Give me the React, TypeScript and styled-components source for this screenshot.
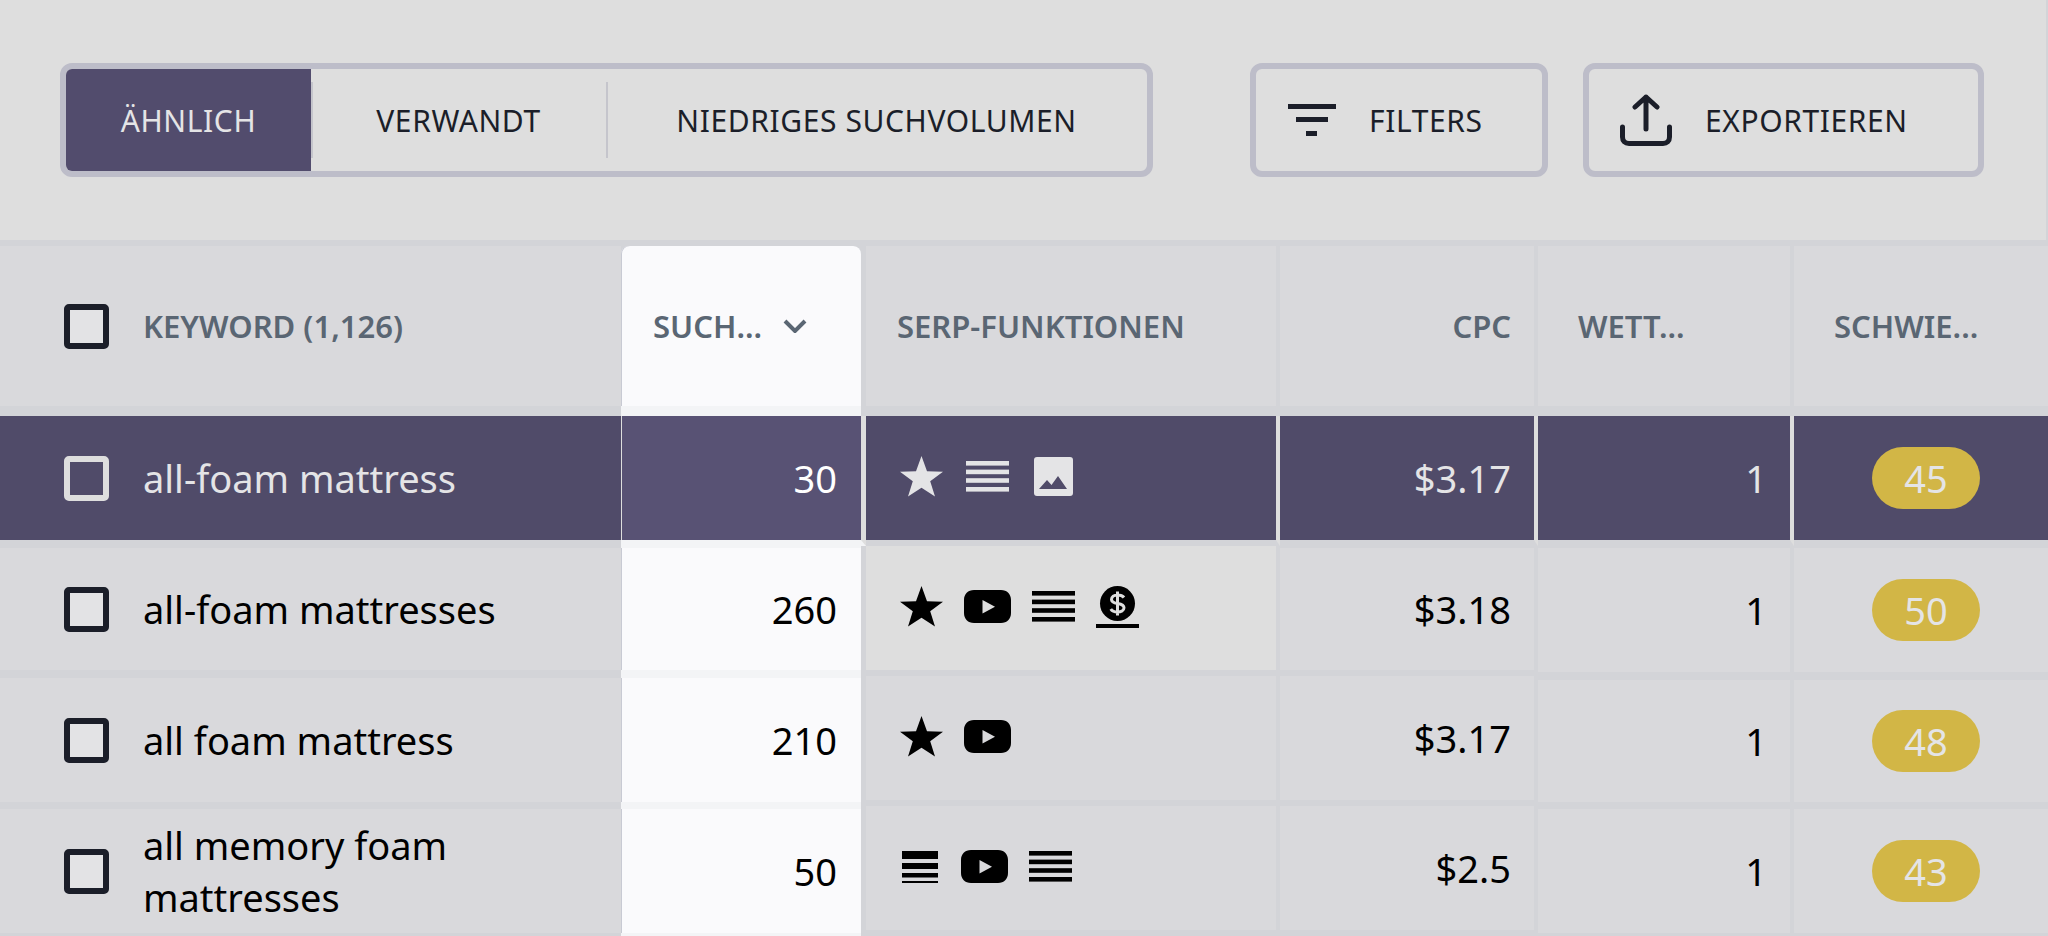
import React from 'react';
import styled, { createGlobalStyle } from 'styled-components';

const Global = createGlobalStyle`
  html, body { margin: 0; padding: 0; background: #dedede; }
  body { font-family: "Noto Sans", "Liberation Sans", sans-serif; overflow: hidden; }
  #root { width: 2048px; height: 936px; overflow: hidden; }
`;

const Page = styled.div`
  width: 2048px;
  height: 936px;
  overflow: hidden;
  background: #d3d4d8;
`;

const Toolbar = styled.div`
  box-sizing: border-box;
  width: 2046px;
  height: 246px;
  padding: 63px 62px 0 60px;
  background: #dedede;
  display: flex;
  align-items: flex-start;
  gap: 35px;
  border-bottom: 6px solid #d3d4d8;
`;

const Segmented = styled.div`
  width: 1093px;
  height: 114px;
  box-sizing: border-box;
  border: 6px solid #bdbdc9;
  border-radius: 12px;
  display: flex;
  overflow: hidden;
  margin-right: 62px;
`;

const Segment = styled.div<{ $active?: boolean; $w: number; $last?: boolean }>`
  width: ${p => p.$w}px;
  flex: none;
  display: flex;
  align-items: center;
  justify-content: center;
  font-size: 30px;
  letter-spacing: 0.6px;
  background: ${p => (p.$active ? '#524c6d' : 'transparent')};
  color: ${p => (p.$active ? '#e4e4e6' : '#1b1e29')};
  position: relative;
  &::after {
    content: '';
    display: ${p => (p.$last ? 'none' : 'block')};
    position: absolute;
    right: -2px;
    top: 13px;
    bottom: 13px;
    width: 2px;
    background: #c5c5cc;
  }
`;

const ToolButton = styled.div<{ $w: number; $pad: number }>`
  width: ${p => p.$w}px;
  height: 114px;
  box-sizing: border-box;
  border: 6px solid #bdbdc9;
  border-radius: 12px;
  display: flex;
  align-items: center;
  font-size: 30px;
  letter-spacing: 0.6px;
  color: #1b1e29;
  padding-left: ${p => p.$pad}px;
  gap: 33px;
`;

const Table = styled.div`
  display: grid;
  grid-template-columns: 621px 245px 414px 258px 256px 254px;
  grid-auto-rows: min-content;
`;

type Kind = 'head' | 'sel' | 'light' | 'plain';

const Cell = styled.div<{ $row: Kind; $h: number; $align?: string; $t?: number; $b?: number }>`
  height: ${p => p.$h}px;
  box-sizing: border-box;
  display: flex;
  align-items: center;
  justify-content: ${p => p.$align || 'flex-start'};
  border-right: 4px solid ${p => (p.$row === 'sel' ? '#dedede' : '#d3d4d8')};
  border-top: ${p => p.$t ?? 0}px solid #d3d4d8;
  border-bottom: ${p => p.$b ?? 6}px solid #d3d4d8;
  background: ${p => (p.$row === 'sel' ? '#504b69' : p.$row === 'light' ? '#dedede' : '#d9d9dc')};
  color: ${p => (p.$row === 'sel' ? '#e4e4e6' : '#000')};
  font-size: 38px;
  padding: 0 23px 0 0;
`;

const KeywordCell = styled(Cell)`
  border-right: none;
  padding: 0 0 0 64px;
  gap: 34px;
`;

const SortCell = styled(Cell)<{ $head?: boolean }>`
  width: ${p => (p.$row === 'sel' ? 245 : 240)}px;
  margin-right: ${p => (p.$row === 'sel' ? 0 : 5)}px;
  border-right: ${p => (p.$row === 'sel' ? '5px solid #dedede' : 'none')};
  border-top-color: #f3f4f6;
  border-bottom-color: #f3f4f6;
  background: ${p => (p.$row === 'sel' ? '#585274' : '#fafafc')};
  color: ${p => (p.$row === 'sel' ? '#fff' : '#000')};
  box-shadow: inset 1px 0 0 ${p => (p.$row === 'sel' ? '#dedede' : '#c8cad3')};
  padding-right: 24px;
  ${p =>
    p.$head
      ? 'border-top-left-radius: 8px; border-top-right-radius: 8px; padding: 0 0 0 32px; justify-content: flex-start; gap: 21px;'
      : ''}
`;

const FeatureCell = styled(Cell)`
  padding: 0 0 3px 34px;
  gap: 21px;
`;

const HeadCell = styled(Cell)<{ $left?: number; $end?: boolean }>`
  padding-left: ${p => p.$left ?? 0}px;
  ${p => (p.$end ? 'border-right: none;' : '')}
`;

const BadgeCell = styled(Cell)`
  border-right: none;
  padding: 0 0 0 78px;
`;

const HeadText = styled.span`
  font-size: 31px;
  font-weight: 600;
  color: #5a6673;
  white-space: nowrap;
`;

const KeywordText = styled.span`
  max-width: 440px;
  line-height: 52px;
`;

const Box = styled.span<{ $light?: boolean }>`
  width: 45px;
  height: 45px;
  flex: none;
  box-sizing: border-box;
  border: 6px solid ${p => (p.$light ? '#dedede' : '#1b1e29')};
  border-radius: 5px;
  background: ${p => (p.$light ? 'transparent' : '#e3e3e5')};
`;

const Badge = styled.span`
  width: 108px;
  height: 62px;
  border-radius: 31px;
  background: #d2b646;
  color: #e4e4e6;
  display: flex;
  align-items: center;
  justify-content: center;
  font-size: 38px;
`;

const Star = () => (
  <svg width="43" height="41" viewBox="0 0 43 41" fill="currentColor">
    <polygon points="21.5,0 27,15.3 43,15.7 30.2,25.2 35,40.5 21.5,31.8 8,40.5 12.8,25.2 0,15.7 16,15.3" />
  </svg>
);
const Lines = ({ w = 43 }: { w?: number }) => (
  <svg width={w} height="31" viewBox={`0 0 ${w} 31`} fill="currentColor">
    <rect x={(w - 43) / 2} y="0" width="43" height="4.6" />
    <rect x={(w - 43) / 2} y="8.6" width="43" height="4.6" />
    <rect x={(w - 43) / 2} y="17.2" width="43" height="4.6" />
    <rect x={(w - 43) / 2} y="26" width="43" height="4.6" />
  </svg>
);
const LinesAlt = () => (
  <svg width="40" height="32" viewBox="0 0 40 32" fill="currentColor">
    <rect x="2" y="0" width="36" height="8" />
    <rect x="2" y="12" width="36" height="6" />
    <rect x="2" y="22" width="36" height="4.5" />
    <rect x="2" y="30" width="36" height="2" />
  </svg>
);
const Youtube = () => (
  <svg width="47" height="33" viewBox="0 0 47 33" fill="currentColor">
    <path
      fillRule="evenodd"
      d="M10 0H37C43 0 47 4 47 10V23C47 29 43 33 37 33H10C4 33 0 29 0 23V10C0 4 4 0 10 0ZM18.5 10V23.5L31 16.7Z"
    />
  </svg>
);
const Picture = () => (
  <svg width="43" height="39" viewBox="0 0 43 39" fill="currentColor">
    <path
      fillRule="evenodd"
      d="M5 0H38C40 0 41 1 41 3V36C41 38 40 39 38 39H5C3 39 2 38 2 36V3C2 1 3 0 5 0ZM7 32H35L26 19L19.5 28L15 23Z"
    />
  </svg>
);
const Dollar = () => (
  <svg width="43" height="42" viewBox="0 0 43 42">
    <circle cx="21.5" cy="17.5" r="17.5" fill="currentColor" />
    <rect x="0" y="38" width="43" height="4" fill="currentColor" />
    <path
      d="M28 11.5C26.5 9.5 24 9 21.5 9C18 9 15.5 10.8 15.5 13.4C15.5 19.5 28 15.5 28 21.8C28 24.5 25 26 21.5 26C18.5 26 16 25 14.8 23M21.5 5.5V29.5"
      fill="none"
      stroke="#dedede"
      strokeWidth="3"
    />
  </svg>
);

type Edge = [number, number];
const rows: {
  kw: string;
  vol: string;
  cpc: string;
  score: string;
  sel?: boolean;
  serpLight?: boolean;
  side: Edge;
  serp: Edge;
  price: Edge;
  tail: Edge;
  icons: React.ReactNode;
}[] = [
  { kw: 'all-foam mattress', vol: '30', cpc: '$3.17', score: '45', sel: true, side: [0, 6], serp: [0, 6], price: [0, 6], tail: [0, 6], icons: <><Star /><Lines w={47} /><Picture /></> },
  { kw: 'all-foam mattresses', vol: '260', cpc: '$3.18', score: '50', serpLight: true, side: [2, 6], serp: [0, 6], price: [2, 6], tail: [2, 4], icons: <><Star /><Youtube /><Lines /><Dollar /></> },
  { kw: 'all foam mattress', vol: '210', cpc: '$3.17', score: '48', side: [2, 4], serp: [0, 6], price: [0, 6], tail: [4, 4], icons: <><Star /><Youtube /></> },
  { kw: 'all memory foam mattresses', vol: '50', cpc: '$2.5', score: '43', side: [3, 3], serp: [0, 6], price: [0, 6], tail: [3, 3], icons: <><LinesAlt /><Youtube /><Lines /></> },
];

export default function App() {
  return (
    <Page>
      <Global />
      <Toolbar>
        <Segmented>
          <Segment $active $w={245}>ÄHNLICH</Segment>
          <Segment $w={295}>VERWANDT</Segment>
          <Segment $w={541} $last>NIEDRIGES SUCHVOLUMEN</Segment>
        </Segmented>
        <ToolButton $w={298} $pad={32}>
          <svg width="48" height="32" viewBox="0 0 48 32" fill="#1b1e29">
            <rect x="0" y="0" width="48" height="5" />
            <rect x="8" y="13" width="32" height="5" />
            <rect x="18" y="27" width="11" height="5" />
          </svg>
          FILTERS
        </ToolButton>
        <ToolButton $w={401} $pad={31}>
          <svg width="52" height="52" viewBox="0 0 52 52" fill="none" stroke="#1b1e29" strokeWidth="5" strokeLinecap="round" strokeLinejoin="round">
            <path d="M26 35V3M15 13L26 3L37 13" />
            <path d="M2.5 33V43C2.5 47 5 49.5 9 49.5H43C47 49.5 49.5 47 49.5 43V33" />
          </svg>
          EXPORTIEREN
        </ToolButton>
      </Toolbar>
      <Table>
        <KeywordCell $row="plain" $h={170} $b={10}>
          <Box />
          <HeadText>KEYWORD (1,126)</HeadText>
        </KeywordCell>
        <SortCell $row="plain" $h={170} $b={10} $head>
          <HeadText>SUCH...</HeadText>
          <svg width="24" height="14" viewBox="0 0 24 14" fill="none" stroke="#5a6673" strokeWidth="4">
            <path d="M2 2L12 12L22 2" />
          </svg>
        </SortCell>
        <HeadCell $row="plain" $h={170} $b={10} $left={31}>
          <HeadText>SERP-FUNKTIONEN</HeadText>
        </HeadCell>
        <HeadCell $row="plain" $h={170} $b={10} $align="flex-end">
          <HeadText>CPC</HeadText>
        </HeadCell>
        <HeadCell $row="plain" $h={170} $b={10} $left={40}>
          <HeadText>WETT...</HeadText>
        </HeadCell>
        <HeadCell $row="plain" $h={170} $b={10} $left={40} $end>
          <HeadText>SCHWIE...</HeadText>
        </HeadCell>
        {rows.map(r => {
          const kind: Kind = r.sel ? 'sel' : 'plain';
          return (
            <React.Fragment key={r.kw}>
              <KeywordCell $row={kind} $h={130} $t={r.side[0]} $b={r.side[1]}>
                <Box $light={r.sel} />
                <KeywordText>{r.kw}</KeywordText>
              </KeywordCell>
              <SortCell $row={kind} $h={130} $t={r.side[0]} $b={r.side[1]} $align="flex-end">{r.vol}</SortCell>
              <FeatureCell $row={r.serpLight ? 'light' : kind} $h={130} $t={r.serp[0]} $b={r.serp[1]}>{r.icons}</FeatureCell>
              <Cell $row={kind} $h={130} $t={r.price[0]} $b={r.price[1]} $align="flex-end">{r.cpc}</Cell>
              <Cell $row={kind} $h={130} $t={r.tail[0]} $b={r.tail[1]} $align="flex-end">1</Cell>
              <BadgeCell $row={kind} $h={130} $t={r.tail[0]} $b={r.tail[1]}><Badge>{r.score}</Badge></BadgeCell>
            </React.Fragment>
          );
        })}
      </Table>
    </Page>
  );
}
